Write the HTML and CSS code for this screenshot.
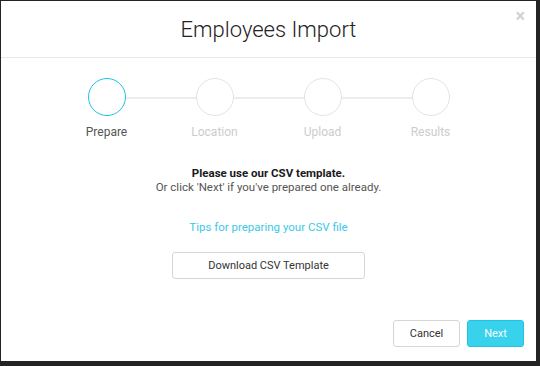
FILE: index.html
```html
<!DOCTYPE html>
<html lang="en">
<head>
  <meta charset="UTF-8">
  <title>Employees Import</title>
  <link rel="stylesheet" href="styles.css">
</head>
<body>
  <div class="modal">
    <div class="modal-header">
      <h1>Employees Import</h1>
      <span class="close">&times;</span>
    </div>

    <div class="modal-body">
      <div class="steps">
        <div class="step active">
          <div class="circle"></div>
          <div class="label">Prepare</div>
        </div>
        <div class="step">
          <div class="circle"></div>
          <div class="label">Location</div>
        </div>
        <div class="step">
          <div class="circle"></div>
          <div class="label">Upload</div>
        </div>
        <div class="step">
          <div class="circle"></div>
          <div class="label">Results</div>
        </div>
      </div>

      <p class="intro"><strong>Please use our CSV template.</strong><br>Or click 'Next' if you've prepared one already.</p>
      <a class="tips" href="#">Tips for preparing your CSV file</a>
      <button class="btn btn-wide">Download CSV Template</button>
    </div>

    <div class="modal-footer">
      <button class="btn">Cancel</button>
      <button class="btn btn-primary">Next</button>
    </div>
  </div>
</body>
</html>
```

FILE: styles.css
```css
html, body {
  margin: 0;
  height: 100%;
}

body {
  background: #242424;
  font-family: Roboto, 'Liberation Sans', sans-serif;
  padding: 1px 0 0 1px;
  box-sizing: border-box;
}

.modal {
  background: #fff;
  width: 535px;
  height: 360px;
  display: flex;
  flex-direction: column;
}

.modal-header {
  position: relative;
  height: 56px;
  border-bottom: 1px solid #e8e8e8;
  display: flex;
  align-items: center;
  justify-content: center;
}

.modal-header h1 {
  margin: 0;
  font-size: 22px;
  font-weight: 300;
  color: #222;
}

.close {
  position: absolute;
  top: 4px;
  right: 11px;
  font-size: 18px;
  font-weight: bold;
  color: #d2d2d2;
}

.modal-body {
  display: flex;
  flex-direction: column;
  align-items: center;
}

.steps {
  display: grid;
  grid-template-columns: repeat(4, 108px);
  margin-top: 20px;
}

.step {
  position: relative;
  display: flex;
  flex-direction: column;
  align-items: center;
}

.step + .step::before {
  content: "";
  position: absolute;
  top: 19px;
  left: -50%;
  right: 50%;
  height: 2px;
  background: #ececec;
}

.circle {
  position: relative;
  z-index: 1;
  width: 36px;
  height: 36px;
  border: 1px solid #e4e4e4;
  border-radius: 50%;
  background: #fff;
}

.label {
  margin-top: 9px;
  font-size: 12px;
  line-height: 14px;
  color: #cccccc;
}

.step.active .circle {
  border-color: #1ec3e6;
}

.step.active .label {
  color: #555;
}

.intro {
  margin: 27px 0 0;
  text-align: center;
  font-size: 11.5px;
  line-height: 14px;
  color: #555;
}

.intro strong {
  color: #1a1a1a;
}

.tips {
  margin-top: 26px;
  font-size: 11.5px;
  line-height: 14px;
  color: #3dc8e6;
  text-decoration: none;
}

.btn {
  height: 27px;
  padding: 0 14px;
  border: 1px solid #d6d6d6;
  border-radius: 3px;
  background: #fff;
  font-family: Roboto, 'Liberation Sans', sans-serif;
  font-size: 11px;
  color: #333;
}

.btn-wide {
  margin-top: 18px;
  width: 193px;
}

.modal-footer {
  margin-top: auto;
  padding: 0 12px 14px 0;
  display: flex;
  justify-content: flex-end;
  gap: 7px;
}

.modal-footer .btn {
  width: 67px;
}

.modal-footer .btn-primary {
  width: 57px;
  background: #39d2ec;
  border-color: #1fc4e4;
  color: #f4fdff;
}
```
